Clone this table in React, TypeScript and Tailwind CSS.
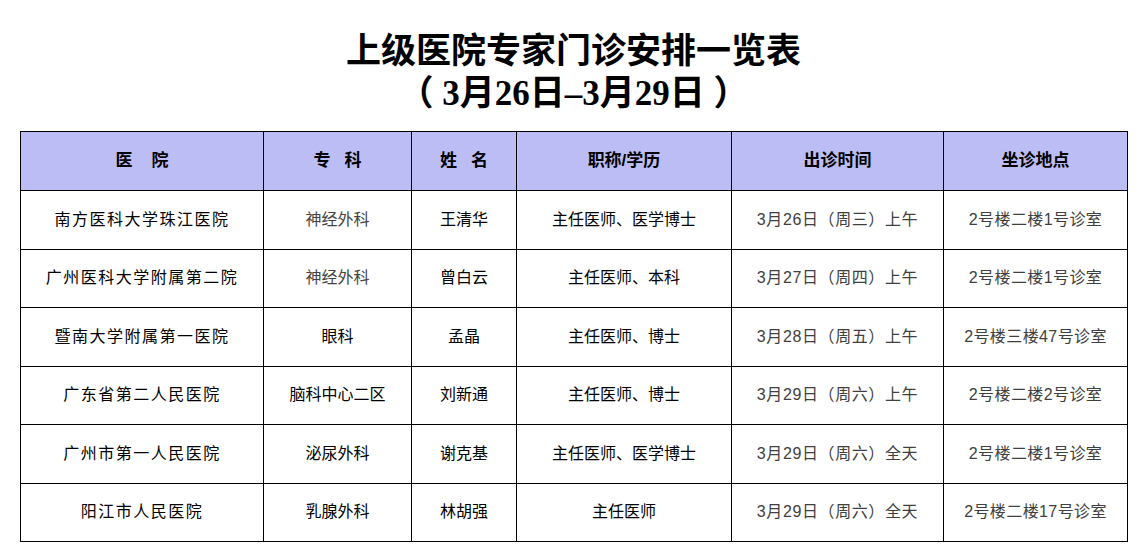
const rows = [
  { hospital: '南方医科大学珠江医院', dept: '神经外科', deptGray: true, name: '王清华', title: '主任医师、医学博士', time: '3月26日（周三）上午', place: '2号楼二楼1号诊室' },
  { hospital: '广州医科大学附属第二院', dept: '神经外科', deptGray: true, name: '曾白云', title: '主任医师、本科', time: '3月27日（周四）上午', place: '2号楼二楼1号诊室' },
  { hospital: '暨南大学附属第一医院', dept: '眼科', deptGray: false, name: '孟晶', title: '主任医师、博士', time: '3月28日（周五）上午', place: '2号楼三楼47号诊室' },
  { hospital: '广东省第二人民医院', dept: '脑科中心二区', deptGray: false, name: '刘新通', title: '主任医师、博士', time: '3月29日（周六）上午', place: '2号楼二楼2号诊室' },
  { hospital: '广州市第一人民医院', dept: '泌尿外科', deptGray: false, name: '谢克基', title: '主任医师、医学博士', time: '3月29日（周六）全天', place: '2号楼二楼1号诊室' },
  { hospital: '阳江市人民医院', dept: '乳腺外科', deptGray: false, name: '林胡强', title: '主任医师', time: '3月29日（周六）全天', place: '2号楼二楼17号诊室' },
];

const cell = 'border border-black text-center align-middle';

export default function App() {
  return (
    <div
      className="w-[1147px] h-[560px] bg-white overflow-hidden"
      style={{ fontFamily: '"Liberation Sans", "Noto Sans CJK SC", sans-serif' }}
    >
      {/* Title */}
      <div
        className="pt-[31px] text-center text-black font-bold text-[35px] leading-[42px]"
        style={{ fontFamily: '"Liberation Serif", "Noto Sans CJK SC", serif' }}
      >
        <div>上级医院专家门诊安排一览表</div>
        <div>（ 3月26日–3月29日 ）</div>
      </div>

      {/* Schedule table */}
      <table className="mt-[16px] ml-[20px] w-[1107px] border-collapse table-fixed text-[16px]">
        <colgroup>
          <col className="w-[243px]" />
          <col className="w-[148px]" />
          <col className="w-[105px]" />
          <col className="w-[215px]" />
          <col className="w-[212px]" />
          <col className="w-[184px]" />
        </colgroup>
        <thead>
          <tr className="h-[59px] bg-[#bdbdf5] text-[17px] font-bold text-black">
            <th className={cell}>医&nbsp;&nbsp;&nbsp;&nbsp;院</th>
            <th className={cell}>专&nbsp;&nbsp;&nbsp;科</th>
            <th className={cell}>姓&nbsp;&nbsp;&nbsp;名</th>
            <th className={cell}>职称/学历</th>
            <th className={cell}>出诊时间</th>
            <th className={cell}>坐诊地点</th>
          </tr>
        </thead>
        <tbody>
          {rows.map((r, i) => (
            <tr key={i} className="h-[58.5px]">
              <td className={`${cell} text-black tracking-[1.5px]`}>{r.hospital}</td>
              <td className={`${cell} ${r.deptGray ? 'text-[#444]' : 'text-black'}`}>{r.dept}</td>
              <td className={`${cell} text-black`}>{r.name}</td>
              <td className={`${cell} text-black`}>{r.title}</td>
              <td className={`${cell} text-[#404040] tracking-[0.6px]`}>{r.time}</td>
              <td className={`${cell} text-[#404040] tracking-[0.4px]`}>{r.place}</td>
            </tr>
          ))}
        </tbody>
      </table>
    </div>
  );
}
